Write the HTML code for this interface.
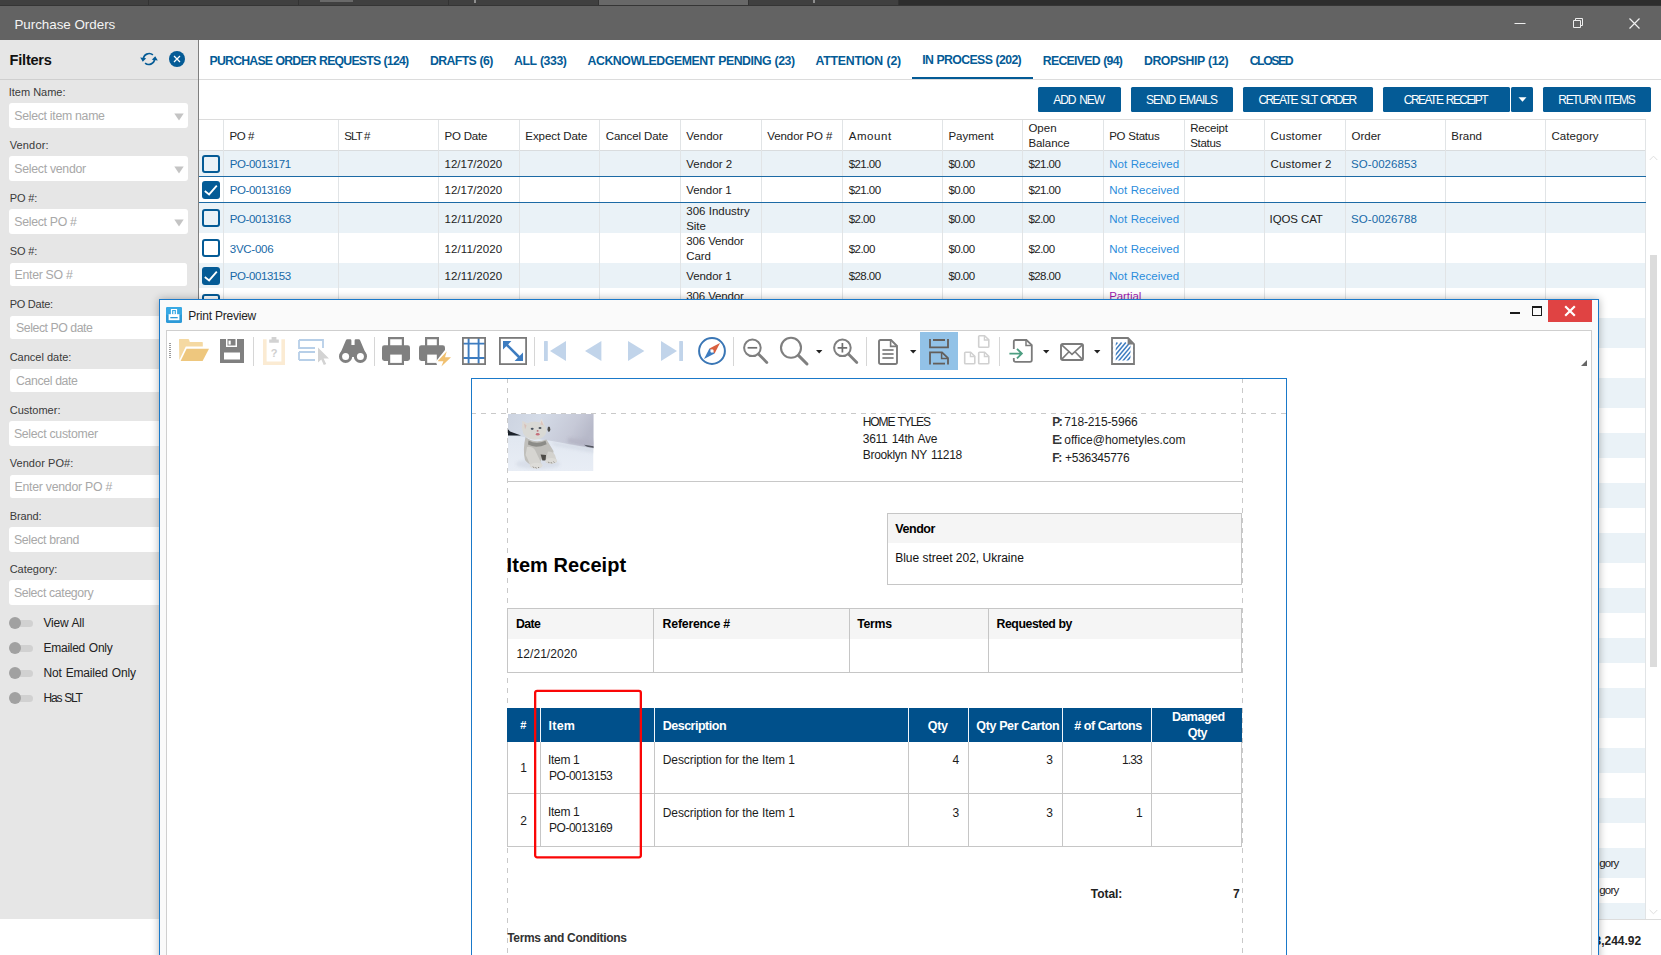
<!DOCTYPE html>
<html><head><meta charset="utf-8"><title>Purchase Orders</title>
<style>
html,body{margin:0;padding:0;}
body{width:1661px;height:955px;overflow:hidden;position:relative;background:#fff;font-family:"Liberation Sans", sans-serif;}
body div{position:absolute;box-sizing:border-box;}
svg{position:absolute;overflow:visible;}
</style></head>
<body>
<div style="left:0px;top:0px;width:1661px;height:6px;background:#2d2d2d;"></div>
<div style="left:0px;top:0px;width:898px;height:5px;background:#404040;"></div>
<div style="left:599px;top:0px;width:149px;height:5px;background:#686868;"></div>
<div style="left:148px;top:0px;width:1px;height:5px;background:#333;"></div>
<div style="left:298px;top:0px;width:1px;height:5px;background:#333;"></div>
<div style="left:448px;top:0px;width:1px;height:5px;background:#333;"></div>
<div style="left:598px;top:0px;width:1px;height:5px;background:#333;"></div>
<div style="left:748px;top:0px;width:1px;height:5px;background:#333;"></div>
<div style="left:898px;top:0px;width:1px;height:5px;background:#333;"></div>
<div style="left:0px;top:5px;width:1661px;height:1px;background:#353535;"></div>
<div style="left:320px;top:0px;width:33px;height:2px;background:#8a8a8a;opacity:.55;"></div>
<div style="left:474px;top:0px;width:2px;height:3px;background:#b0b0b0;opacity:.7;"></div>
<div style="left:813px;top:0px;width:2px;height:3px;background:#b0b0b0;opacity:.7;"></div>
<div style="left:0px;top:6px;width:1661px;height:34px;background:#636363;"></div>
<div style="left:14.40px;top:18.00px;font-size:13.4px;line-height:13.4px;color:#f4f4f4;letter-spacing:-0.023px;white-space:pre;">Purchase Orders</div>
<svg style="left:1510px;top:12px" width="140" height="24" viewBox="0 0 140 24"><path d="M4.5 11.5H15.5" stroke="#eee" stroke-width="1"/><path d="M63.5 8.5H70.5V15.5H63.5Z M65.5 8.5V6.5H72.5V13.5H70.5" fill="none" stroke="#eee" stroke-width="1"/><path d="M119.5 6.5L129.5 16.5M129.5 6.5L119.5 16.5" stroke="#f2f2f2" stroke-width="1.2"/></svg>
<div style="left:0px;top:40px;width:198px;height:879px;background:#e6e6e6;"></div>
<div style="left:198px;top:40px;width:1px;height:879px;background:#7f7f7f;"></div>
<div style="left:0px;top:79px;width:198px;height:1px;background:#cfcfcf;"></div>
<div style="left:9.60px;top:53.00px;font-size:14.6px;line-height:14.6px;color:#111;letter-spacing:-0.247px;white-space:pre;font-weight:700;">Filters</div>
<svg style="left:139px;top:50px" width="20" height="18" viewBox="0 0 20 18"><path d="M4.4 9.4A5.8 5.8 0 0 1 13.9 4.9" fill="none" stroke="#045b96" stroke-width="1.7"/><path d="M15.6 8.6A5.8 5.8 0 0 1 6.1 13.1" fill="none" stroke="#045b96" stroke-width="1.7"/><path d="M1.2 7.6L7.2 8.2L3.8 11.8Z" fill="#045b96"/><path d="M18.8 10.4L12.8 9.8L16.2 6.2Z" fill="#045b96"/></svg>
<svg style="left:169px;top:51px" width="16" height="16" viewBox="0 0 16 16"><circle cx="8" cy="8" r="8" fill="#045b96"/><path d="M5 5L11 11M11 5L5 11" stroke="#fff" stroke-width="1.25"/></svg>
<div style="left:8.70px;top:87.00px;font-size:11px;line-height:11px;color:#3a3a3a;letter-spacing:0.001px;white-space:pre;">Item Name:</div>
<div style="left:9px;top:103px;width:179px;height:25px;background:#fff;border-radius:3px;"></div>
<div style="left:14.30px;top:110.00px;font-size:12.3px;line-height:12.3px;color:#a8a8a8;letter-spacing:-0.291px;white-space:pre;">Select item name</div>
<svg style="left:174px;top:113px" width="10" height="8" viewBox="0 0 10 8"><path d="M0.3 0.5H9.7L5 7.5Z" fill="#c4c4c4"/></svg>
<div style="left:9.70px;top:140.00px;font-size:11px;line-height:11px;color:#3a3a3a;letter-spacing:0.156px;white-space:pre;">Vendor:</div>
<div style="left:9px;top:156px;width:179px;height:25px;background:#fff;border-radius:3px;"></div>
<div style="left:14.30px;top:163.00px;font-size:12.3px;line-height:12.3px;color:#a8a8a8;letter-spacing:-0.282px;white-space:pre;">Select vendor</div>
<svg style="left:174px;top:166px" width="10" height="8" viewBox="0 0 10 8"><path d="M0.3 0.5H9.7L5 7.5Z" fill="#c4c4c4"/></svg>
<div style="left:9.70px;top:193.00px;font-size:11px;line-height:11px;color:#3a3a3a;letter-spacing:-0.105px;white-space:pre;">PO #:</div>
<div style="left:9px;top:209px;width:179px;height:25px;background:#fff;border-radius:3px;"></div>
<div style="left:14.30px;top:216.00px;font-size:12.3px;line-height:12.3px;color:#a8a8a8;letter-spacing:-0.296px;white-space:pre;">Select PO #</div>
<svg style="left:174px;top:219px" width="10" height="8" viewBox="0 0 10 8"><path d="M0.3 0.5H9.7L5 7.5Z" fill="#c4c4c4"/></svg>
<div style="left:9.70px;top:246.00px;font-size:11px;line-height:11px;color:#3a3a3a;letter-spacing:-0.105px;white-space:pre;">SO #:</div>
<div style="left:10px;top:263px;width:177px;height:23px;background:#fff;border-radius:2.5px;"></div>
<div style="left:14.60px;top:269.00px;font-size:12.3px;line-height:12.3px;color:#a8a8a8;letter-spacing:-0.3px;white-space:pre;">Enter SO #</div>
<div style="left:9.70px;top:299.00px;font-size:11px;line-height:11px;color:#3a3a3a;letter-spacing:-0.255px;white-space:pre;">PO Date:</div>
<div style="left:10px;top:316px;width:177px;height:23px;background:#fff;border-radius:2.5px;"></div>
<div style="left:16.10px;top:322.00px;font-size:12.3px;line-height:12.3px;color:#a8a8a8;letter-spacing:-0.452px;white-space:pre;">Select PO date</div>
<div style="left:9.70px;top:352.00px;font-size:11px;line-height:11px;color:#3a3a3a;letter-spacing:-0.01px;white-space:pre;">Cancel date:</div>
<div style="left:10px;top:369px;width:177px;height:23px;background:#fff;border-radius:2.5px;"></div>
<div style="left:16.10px;top:375.00px;font-size:12.3px;line-height:12.3px;color:#a8a8a8;letter-spacing:-0.379px;white-space:pre;">Cancel date</div>
<div style="left:9.70px;top:405.00px;font-size:11px;line-height:11px;color:#3a3a3a;letter-spacing:0.003px;white-space:pre;">Customer:</div>
<div style="left:9px;top:421px;width:179px;height:25px;background:#fff;border-radius:3px;"></div>
<div style="left:13.90px;top:428.00px;font-size:12.3px;line-height:12.3px;color:#a8a8a8;letter-spacing:-0.283px;white-space:pre;">Select customer</div>
<div style="left:9.70px;top:458.00px;font-size:11px;line-height:11px;color:#3a3a3a;letter-spacing:0.067px;white-space:pre;">Vendor PO#:</div>
<div style="left:10px;top:475px;width:177px;height:23px;background:#fff;border-radius:2.5px;"></div>
<div style="left:14.60px;top:481.00px;font-size:12.3px;line-height:12.3px;color:#a8a8a8;letter-spacing:-0.263px;white-space:pre;">Enter vendor PO #</div>
<div style="left:9.70px;top:511.00px;font-size:11px;line-height:11px;color:#3a3a3a;letter-spacing:-0.111px;white-space:pre;">Brand:</div>
<div style="left:9px;top:527px;width:179px;height:25px;background:#fff;border-radius:3px;"></div>
<div style="left:13.90px;top:534.00px;font-size:12.3px;line-height:12.3px;color:#a8a8a8;letter-spacing:-0.319px;white-space:pre;">Select brand</div>
<div style="left:9.70px;top:564.00px;font-size:11px;line-height:11px;color:#3a3a3a;letter-spacing:-0.017px;white-space:pre;">Category:</div>
<div style="left:9px;top:580px;width:179px;height:25px;background:#fff;border-radius:3px;"></div>
<div style="left:13.90px;top:587.00px;font-size:12.3px;line-height:12.3px;color:#a8a8a8;letter-spacing:-0.351px;white-space:pre;">Select category</div>
<div style="left:12px;top:619.5px;width:21px;height:7px;background:#d1d1d1;border-radius:3.5px;"></div>
<div style="left:9px;top:617px;width:12px;height:12px;background:#a1a1a1;border-radius:6px;"></div>
<div style="left:43.60px;top:617.00px;font-size:12px;line-height:12px;color:#222;letter-spacing:-0.257px;white-space:pre;word-spacing:0.8px;">View All</div>
<div style="left:12px;top:644.5px;width:21px;height:7px;background:#d1d1d1;border-radius:3.5px;"></div>
<div style="left:9px;top:642px;width:12px;height:12px;background:#a1a1a1;border-radius:6px;"></div>
<div style="left:43.60px;top:642.00px;font-size:12px;line-height:12px;color:#222;letter-spacing:-0.278px;white-space:pre;word-spacing:0.8px;">Emailed Only</div>
<div style="left:12px;top:669.5px;width:21px;height:7px;background:#d1d1d1;border-radius:3.5px;"></div>
<div style="left:9px;top:667px;width:12px;height:12px;background:#a1a1a1;border-radius:6px;"></div>
<div style="left:43.60px;top:667.00px;font-size:12px;line-height:12px;color:#222;letter-spacing:-0.178px;white-space:pre;word-spacing:0.8px;">Not Emailed Only</div>
<div style="left:12px;top:694.5px;width:21px;height:7px;background:#d1d1d1;border-radius:3.5px;"></div>
<div style="left:9px;top:692px;width:12px;height:12px;background:#a1a1a1;border-radius:6px;"></div>
<div style="left:43.60px;top:692.00px;font-size:12px;line-height:12px;color:#222;letter-spacing:-1.21px;white-space:pre;word-spacing:0.8px;">Has SLT</div>
<div style="left:199px;top:79px;width:1462px;height:1px;background:#dcdcdc;"></div>
<div style="left:209.60px;top:55.00px;font-size:12.3px;line-height:12.3px;color:#045b96;letter-spacing:-0.797px;white-space:pre;font-weight:700;word-spacing:0.6px;">PURCHASE ORDER REQUESTS (124)</div>
<div style="left:430.00px;top:55.00px;font-size:12.3px;line-height:12.3px;color:#045b96;letter-spacing:-0.613px;white-space:pre;font-weight:700;word-spacing:0.6px;">DRAFTS (6)</div>
<div style="left:514.00px;top:55.00px;font-size:12.3px;line-height:12.3px;color:#045b96;letter-spacing:-0.441px;white-space:pre;font-weight:700;word-spacing:0.6px;">ALL (333)</div>
<div style="left:587.60px;top:55.00px;font-size:12.3px;line-height:12.3px;color:#045b96;letter-spacing:-0.456px;white-space:pre;font-weight:700;word-spacing:0.6px;">ACKNOWLEDGEMENT PENDING (23)</div>
<div style="left:815.60px;top:55.00px;font-size:12.3px;line-height:12.3px;color:#045b96;letter-spacing:-0.25px;white-space:pre;font-weight:700;word-spacing:0.6px;">ATTENTION (2)</div>
<div style="left:922.20px;top:54.00px;font-size:12.3px;line-height:12.3px;color:#045b96;letter-spacing:-0.645px;white-space:pre;font-weight:700;word-spacing:0.6px;">IN PROCESS (202)</div>
<div style="left:1042.80px;top:55.00px;font-size:12.3px;line-height:12.3px;color:#045b96;letter-spacing:-0.721px;white-space:pre;font-weight:700;word-spacing:0.6px;">RECEIVED (94)</div>
<div style="left:1144.00px;top:55.00px;font-size:12.3px;line-height:12.3px;color:#045b96;letter-spacing:-0.443px;white-space:pre;font-weight:700;word-spacing:0.6px;">DROPSHIP (12)</div>
<div style="left:1249.70px;top:55.00px;font-size:12.3px;line-height:12.3px;color:#045b96;letter-spacing:-1.452px;white-space:pre;font-weight:700;word-spacing:0.6px;">CLOSED</div>
<div style="left:911.5px;top:77px;width:121px;height:2px;background:#045b96;"></div>
<div style="left:1038px;top:87px;width:83px;height:25px;background:#045b96;border-radius:1.5px;"></div>
<div style="left:1053.25px;top:94.00px;font-size:12px;line-height:12px;color:#fff;letter-spacing:-1.073px;white-space:pre;word-spacing:1.6px;">ADD NEW</div>
<div style="left:1131px;top:87px;width:102px;height:25px;background:#045b96;border-radius:1.5px;"></div>
<div style="left:1146.10px;top:94.00px;font-size:12px;line-height:12px;color:#fff;letter-spacing:-1.049px;white-space:pre;word-spacing:1.6px;">SEND EMAILS</div>
<div style="left:1243px;top:87px;width:130px;height:25px;background:#045b96;border-radius:1.5px;"></div>
<div style="left:1258.40px;top:94.00px;font-size:12px;line-height:12px;color:#fff;letter-spacing:-1.549px;white-space:pre;word-spacing:1.6px;">CREATE SLT ORDER</div>
<div style="left:1383px;top:87px;width:127px;height:25px;background:#045b96;border-radius:1.5px;"></div>
<div style="left:1403.75px;top:94.00px;font-size:12px;line-height:12px;color:#fff;letter-spacing:-1.53px;white-space:pre;word-spacing:1.6px;">CREATE RECEIPT</div>
<div style="left:1511px;top:87px;width:22px;height:25px;background:#045b96;border-radius:1.5px;"></div>
<div style="left:1543px;top:87px;width:108px;height:25px;background:#045b96;border-radius:1.5px;"></div>
<div style="left:1558.25px;top:94.00px;font-size:12px;line-height:12px;color:#fff;letter-spacing:-1.281px;white-space:pre;word-spacing:1.6px;">RETURN ITEMS</div>
<svg style="left:1517.5px;top:97px" width="9" height="5" viewBox="0 0 9 5"><path d="M0.5 0.3H8.5L4.5 4.7Z" fill="#fff"/></svg>
<div style="left:199px;top:119px;width:1447px;height:1px;background:#dcdcdc;"></div>
<div style="left:199px;top:150px;width:1447px;height:26px;background:#eaf2f7;"></div>
<div style="left:199px;top:202px;width:1447px;height:31px;background:#eaf2f7;"></div>
<div style="left:199px;top:263px;width:1447px;height:25px;background:#eaf2f7;"></div>
<div style="left:199px;top:318px;width:1447px;height:30px;background:#eaf2f7;"></div>
<div style="left:199px;top:378px;width:1447px;height:30px;background:#eaf2f7;"></div>
<div style="left:199px;top:433px;width:1447px;height:25px;background:#eaf2f7;"></div>
<div style="left:199px;top:483px;width:1447px;height:25px;background:#eaf2f7;"></div>
<div style="left:199px;top:533px;width:1447px;height:30px;background:#eaf2f7;"></div>
<div style="left:199px;top:588px;width:1447px;height:25px;background:#eaf2f7;"></div>
<div style="left:199px;top:638px;width:1447px;height:25px;background:#eaf2f7;"></div>
<div style="left:199px;top:688px;width:1447px;height:30px;background:#eaf2f7;"></div>
<div style="left:199px;top:748px;width:1447px;height:25px;background:#eaf2f7;"></div>
<div style="left:199px;top:798px;width:1447px;height:25px;background:#eaf2f7;"></div>
<div style="left:199px;top:848px;width:1447px;height:30px;background:#eaf2f7;"></div>
<div style="left:199px;top:903px;width:1447px;height:16px;background:#eaf2f7;"></div>
<div style="left:199px;top:150px;width:1447px;height:1px;background:#d9dcde;"></div>
<div style="left:223px;top:120px;width:1px;height:799px;background:#e1e4e6;"></div>
<div style="left:338px;top:120px;width:1px;height:799px;background:#e1e4e6;"></div>
<div style="left:438px;top:120px;width:1px;height:799px;background:#e1e4e6;"></div>
<div style="left:519px;top:120px;width:1px;height:799px;background:#e1e4e6;"></div>
<div style="left:599px;top:120px;width:1px;height:799px;background:#e1e4e6;"></div>
<div style="left:680px;top:120px;width:1px;height:799px;background:#e1e4e6;"></div>
<div style="left:761px;top:120px;width:1px;height:799px;background:#e1e4e6;"></div>
<div style="left:842px;top:120px;width:1px;height:799px;background:#e1e4e6;"></div>
<div style="left:942px;top:120px;width:1px;height:799px;background:#e1e4e6;"></div>
<div style="left:1022px;top:120px;width:1px;height:799px;background:#e1e4e6;"></div>
<div style="left:1103px;top:120px;width:1px;height:799px;background:#e1e4e6;"></div>
<div style="left:1184px;top:120px;width:1px;height:799px;background:#e1e4e6;"></div>
<div style="left:1264px;top:120px;width:1px;height:799px;background:#e1e4e6;"></div>
<div style="left:1345px;top:120px;width:1px;height:799px;background:#e1e4e6;"></div>
<div style="left:1445px;top:120px;width:1px;height:799px;background:#e1e4e6;"></div>
<div style="left:1545px;top:120px;width:1px;height:799px;background:#e1e4e6;"></div>
<div style="left:1645px;top:120px;width:1px;height:799px;background:#e1e4e6;"></div>
<div style="left:199px;top:176px;width:1447px;height:1px;background:#1c6aa5;"></div>
<div style="left:199px;top:202px;width:1447px;height:1px;background:#1c6aa5;"></div>
<div style="left:229.50px;top:131.00px;font-size:11.5px;line-height:11.5px;color:#222;letter-spacing:-0.437px;white-space:pre;">PO #</div>
<div style="left:344.20px;top:131.00px;font-size:11.5px;line-height:11.5px;color:#222;letter-spacing:-0.858px;white-space:pre;">SLT #</div>
<div style="left:444.50px;top:131.00px;font-size:11.5px;line-height:11.5px;color:#222;letter-spacing:-0.201px;white-space:pre;">PO Date</div>
<div style="left:525.30px;top:131.00px;font-size:11.5px;line-height:11.5px;color:#222;letter-spacing:-0.065px;white-space:pre;">Expect Date</div>
<div style="left:605.70px;top:131.00px;font-size:11.5px;line-height:11.5px;color:#222;letter-spacing:-0.089px;white-space:pre;">Cancel Date</div>
<div style="left:686.30px;top:131.00px;font-size:11.5px;line-height:11.5px;color:#222;letter-spacing:0.016px;white-space:pre;">Vendor</div>
<div style="left:767.30px;top:131.00px;font-size:11.5px;line-height:11.5px;color:#222;letter-spacing:-0.085px;white-space:pre;">Vendor PO #</div>
<div style="left:848.70px;top:131.00px;font-size:11.5px;line-height:11.5px;color:#222;letter-spacing:0.573px;white-space:pre;">Amount</div>
<div style="left:948.40px;top:131.00px;font-size:11.5px;line-height:11.5px;color:#222;letter-spacing:0.002px;white-space:pre;">Payment</div>
<div style="left:1109.20px;top:131.00px;font-size:11.5px;line-height:11.5px;color:#222;letter-spacing:-0.245px;white-space:pre;">PO Status</div>
<div style="left:1270.60px;top:131.00px;font-size:11.5px;line-height:11.5px;color:#222;letter-spacing:0.183px;white-space:pre;">Customer</div>
<div style="left:1351.60px;top:131.00px;font-size:11.5px;line-height:11.5px;color:#222;letter-spacing:-0.042px;white-space:pre;">Order</div>
<div style="left:1451.20px;top:131.00px;font-size:11.5px;line-height:11.5px;color:#222;letter-spacing:0.027px;white-space:pre;">Brand</div>
<div style="left:1551.50px;top:131.00px;font-size:11.5px;line-height:11.5px;color:#222;letter-spacing:0.055px;white-space:pre;">Category</div>
<div style="left:1028.40px;top:123.00px;font-size:11.5px;line-height:11.5px;color:#222;letter-spacing:0.021px;white-space:pre;">Open</div>
<div style="left:1028.40px;top:138.00px;font-size:11.5px;line-height:11.5px;color:#222;letter-spacing:-0.06px;white-space:pre;">Balance</div>
<div style="left:1190.20px;top:123.00px;font-size:11.5px;line-height:11.5px;color:#222;letter-spacing:-0.216px;white-space:pre;">Receipt</div>
<div style="left:1190.20px;top:138.00px;font-size:11.5px;line-height:11.5px;color:#222;letter-spacing:-0.29px;white-space:pre;">Status</div>
<div style="left:202px;top:155px;width:18px;height:18px;border:2px solid #045b96;border-radius:3px;"></div>
<div style="left:229.80px;top:159.00px;font-size:11.5px;line-height:11.5px;color:#1769a7;letter-spacing:-0.424px;white-space:pre;">PO-0013171</div>
<div style="left:444.50px;top:159.00px;font-size:11.5px;line-height:11.5px;color:#222;letter-spacing:0.016px;white-space:pre;">12/17/2020</div>
<div style="left:686.30px;top:159.00px;font-size:11.5px;line-height:11.5px;color:#222;letter-spacing:-0.035px;white-space:pre;">Vendor 2</div>
<div style="left:848.70px;top:159.00px;font-size:11.5px;line-height:11.5px;color:#222;letter-spacing:-0.556px;white-space:pre;">$21.00</div>
<div style="left:948.40px;top:159.00px;font-size:11.5px;line-height:11.5px;color:#222;letter-spacing:-0.521px;white-space:pre;">$0.00</div>
<div style="left:1028.40px;top:159.00px;font-size:11.5px;line-height:11.5px;color:#222;letter-spacing:-0.556px;white-space:pre;">$21.00</div>
<div style="left:1109.20px;top:159.00px;font-size:11.5px;line-height:11.5px;color:#2b8ddc;letter-spacing:0.087px;white-space:pre;">Not Received</div>
<div style="left:1270.60px;top:159.00px;font-size:11.5px;line-height:11.5px;color:#222;letter-spacing:0.151px;white-space:pre;">Customer 2</div>
<div style="left:1351.00px;top:159.00px;font-size:11.5px;line-height:11.5px;color:#1769a7;letter-spacing:0.076px;white-space:pre;">SO-0026853</div>
<div style="left:202px;top:181px;width:18px;height:18px;background:#045b96;border-radius:3px;"></div>
<svg style="left:202px;top:181px" width="18" height="18" viewBox="0 0 18 18"><path d="M2.8 10L7.1 13.4L14.8 4.6" fill="none" stroke="#fff" stroke-width="1.8"/></svg>
<div style="left:229.80px;top:185.00px;font-size:11.5px;line-height:11.5px;color:#1769a7;letter-spacing:-0.424px;white-space:pre;">PO-0013169</div>
<div style="left:444.50px;top:185.00px;font-size:11.5px;line-height:11.5px;color:#222;letter-spacing:0.016px;white-space:pre;">12/17/2020</div>
<div style="left:686.30px;top:185.00px;font-size:11.5px;line-height:11.5px;color:#222;letter-spacing:-0.092px;white-space:pre;">Vendor 1</div>
<div style="left:848.70px;top:185.00px;font-size:11.5px;line-height:11.5px;color:#222;letter-spacing:-0.556px;white-space:pre;">$21.00</div>
<div style="left:948.40px;top:185.00px;font-size:11.5px;line-height:11.5px;color:#222;letter-spacing:-0.521px;white-space:pre;">$0.00</div>
<div style="left:1028.40px;top:185.00px;font-size:11.5px;line-height:11.5px;color:#222;letter-spacing:-0.556px;white-space:pre;">$21.00</div>
<div style="left:1109.20px;top:185.00px;font-size:11.5px;line-height:11.5px;color:#2b8ddc;letter-spacing:0.087px;white-space:pre;">Not Received</div>
<div style="left:202px;top:209px;width:18px;height:18px;border:2px solid #045b96;border-radius:3px;"></div>
<div style="left:229.80px;top:214.00px;font-size:11.5px;line-height:11.5px;color:#1769a7;letter-spacing:-0.424px;white-space:pre;">PO-0013163</div>
<div style="left:444.50px;top:214.00px;font-size:11.5px;line-height:11.5px;color:#222;letter-spacing:0.11px;white-space:pre;">12/11/2020</div>
<div style="left:686.30px;top:206.00px;font-size:11.5px;line-height:11.5px;color:#222;letter-spacing:0.006px;white-space:pre;">306 Industry</div>
<div style="left:686.30px;top:221.00px;font-size:11.5px;line-height:11.5px;color:#222;letter-spacing:-0.097px;white-space:pre;">Site</div>
<div style="left:848.70px;top:214.00px;font-size:11.5px;line-height:11.5px;color:#222;letter-spacing:-0.521px;white-space:pre;">$2.00</div>
<div style="left:948.40px;top:214.00px;font-size:11.5px;line-height:11.5px;color:#222;letter-spacing:-0.521px;white-space:pre;">$0.00</div>
<div style="left:1028.40px;top:214.00px;font-size:11.5px;line-height:11.5px;color:#222;letter-spacing:-0.521px;white-space:pre;">$2.00</div>
<div style="left:1109.20px;top:214.00px;font-size:11.5px;line-height:11.5px;color:#2b8ddc;letter-spacing:0.087px;white-space:pre;">Not Received</div>
<div style="left:1269.60px;top:214.00px;font-size:11.5px;line-height:11.5px;color:#222;letter-spacing:-0.114px;white-space:pre;">IQOS CAT</div>
<div style="left:1351.00px;top:214.00px;font-size:11.5px;line-height:11.5px;color:#1769a7;letter-spacing:0.076px;white-space:pre;">SO-0026788</div>
<div style="left:202px;top:239px;width:18px;height:18px;border:2px solid #045b96;border-radius:3px;"></div>
<div style="left:229.80px;top:244.00px;font-size:11.5px;line-height:11.5px;color:#1769a7;letter-spacing:-0.265px;white-space:pre;">3VC-006</div>
<div style="left:444.50px;top:244.00px;font-size:11.5px;line-height:11.5px;color:#222;letter-spacing:0.11px;white-space:pre;">12/11/2020</div>
<div style="left:686.30px;top:236.00px;font-size:11.5px;line-height:11.5px;color:#222;letter-spacing:-0.133px;white-space:pre;">306 Vendor</div>
<div style="left:686.30px;top:251.00px;font-size:11.5px;line-height:11.5px;color:#222;letter-spacing:-0.123px;white-space:pre;">Card</div>
<div style="left:848.70px;top:244.00px;font-size:11.5px;line-height:11.5px;color:#222;letter-spacing:-0.521px;white-space:pre;">$2.00</div>
<div style="left:948.40px;top:244.00px;font-size:11.5px;line-height:11.5px;color:#222;letter-spacing:-0.521px;white-space:pre;">$0.00</div>
<div style="left:1028.40px;top:244.00px;font-size:11.5px;line-height:11.5px;color:#222;letter-spacing:-0.521px;white-space:pre;">$2.00</div>
<div style="left:1109.20px;top:244.00px;font-size:11.5px;line-height:11.5px;color:#2b8ddc;letter-spacing:0.087px;white-space:pre;">Not Received</div>
<div style="left:202px;top:267px;width:18px;height:18px;background:#045b96;border-radius:3px;"></div>
<svg style="left:202px;top:267px" width="18" height="18" viewBox="0 0 18 18"><path d="M2.8 10L7.1 13.4L14.8 4.6" fill="none" stroke="#fff" stroke-width="1.8"/></svg>
<div style="left:229.80px;top:271.00px;font-size:11.5px;line-height:11.5px;color:#1769a7;letter-spacing:-0.424px;white-space:pre;">PO-0013153</div>
<div style="left:444.50px;top:271.00px;font-size:11.5px;line-height:11.5px;color:#222;letter-spacing:0.11px;white-space:pre;">12/11/2020</div>
<div style="left:686.30px;top:271.00px;font-size:11.5px;line-height:11.5px;color:#222;letter-spacing:-0.092px;white-space:pre;">Vendor 1</div>
<div style="left:848.70px;top:271.00px;font-size:11.5px;line-height:11.5px;color:#222;letter-spacing:-0.556px;white-space:pre;">$28.00</div>
<div style="left:948.40px;top:271.00px;font-size:11.5px;line-height:11.5px;color:#222;letter-spacing:-0.521px;white-space:pre;">$0.00</div>
<div style="left:1028.40px;top:271.00px;font-size:11.5px;line-height:11.5px;color:#222;letter-spacing:-0.556px;white-space:pre;">$28.00</div>
<div style="left:1109.20px;top:271.00px;font-size:11.5px;line-height:11.5px;color:#2b8ddc;letter-spacing:0.087px;white-space:pre;">Not Received</div>
<div style="left:202px;top:294px;width:18px;height:18px;border:2px solid #045b96;border-radius:3px;"></div>
<div style="left:686.30px;top:291.00px;font-size:11.5px;line-height:11.5px;color:#222;letter-spacing:-0.133px;white-space:pre;">306 Vendor</div>
<div style="left:1109.20px;top:291.00px;font-size:11.5px;line-height:11.5px;color:#a21cb0;letter-spacing:-0.08px;white-space:pre;">Partial</div>
<div style="left:848.70px;top:298.00px;font-size:11.5px;line-height:11.5px;color:#222;letter-spacing:0px;white-space:pre;">$</div>
<div style="left:948.40px;top:298.00px;font-size:11.5px;line-height:11.5px;color:#222;letter-spacing:0px;white-space:pre;">$</div>
<div style="left:1028.40px;top:298.00px;font-size:11.5px;line-height:11.5px;color:#222;letter-spacing:0px;white-space:pre;">$</div>
<div style="left:1599.30px;top:858.00px;font-size:11.5px;line-height:11.5px;color:#222;letter-spacing:-0.84px;white-space:pre;">gory</div>
<div style="left:1599.30px;top:885.00px;font-size:11.5px;line-height:11.5px;color:#222;letter-spacing:-0.84px;white-space:pre;">gory</div>
<div style="left:1646px;top:120px;width:15px;height:799px;background:#fff;"></div>
<div style="left:1650px;top:255px;width:7px;height:412px;background:#dcdcdc;"></div>
<svg style="left:1649px;top:155px" width="9" height="6" viewBox="0 0 9 6"><path d="M0.7 5L4.5 1.2L8.3 5" fill="none" stroke="#dedede" stroke-width="1"/></svg>
<svg style="left:1649px;top:909px" width="9" height="6" viewBox="0 0 9 6"><path d="M0.7 1L4.5 4.8L8.3 1" fill="none" stroke="#dedede" stroke-width="1"/></svg>
<div style="left:0px;top:919px;width:1661px;height:36px;background:#fff;"></div>
<div style="left:199px;top:919px;width:1462px;height:1px;background:#dddddd;"></div>
<div style="left:1594.46px;top:935.00px;font-size:12px;line-height:12px;color:#222;letter-spacing:0.0px;white-space:pre;font-weight:700;">3,244.92</div>
<div style="left:159px;top:299px;width:1440px;height:700px;background:#fafafa;border:1px solid #1a79c9;box-shadow:0 0 8px 0 rgba(0,0,0,.30);"></div>
<div style="left:166px;top:330px;width:1426px;height:700px;background:#fff;border:1px solid #cfcfcf;"></div>
<svg style="left:166px;top:307px" width="16" height="16" viewBox="0 0 16 16"><rect x="0" y="0" width="16" height="16" rx="1.5" fill="#2c9ad8"/><rect x="0" y="0" width="16" height="8" rx="1.5" fill="#38a9e4"/><path d="M5.5 2.5H10.5V8H5.5Z" fill="none" stroke="#fff" stroke-width="1.2"/><rect x="7" y="4" width="2" height="3" fill="#bfe3f7"/><path d="M2.6 7.2H13.4V13.2H2.6Z" fill="#fff"/><rect x="4.3" y="10" width="7.4" height="1.3" fill="#2c9ad8"/></svg>
<div style="left:188.30px;top:310.00px;font-size:12px;line-height:12px;color:#1e1e1e;letter-spacing:-0.227px;white-space:pre;">Print Preview</div>
<div style="left:1510px;top:312px;width:10px;height:2px;background:#1a1a1a;"></div>
<div style="left:1532px;top:306px;width:10px;height:10px;border:1px solid #1a1a1a;border-top:2px solid #1a1a1a;"></div>
<div style="left:1548px;top:300px;width:44px;height:22px;background:#e04343;"></div>
<svg style="left:1564px;top:305px" width="12" height="12" viewBox="0 0 12 12"><path d="M1.2 1.2L10.8 10.8M10.8 1.2L1.2 10.8" stroke="#fff" stroke-width="2.2"/></svg>
<svg style="left:1581px;top:360px" width="6" height="6" viewBox="0 0 6 6"><path d="M6 0V6H0Z" fill="#666"/></svg>
<svg style="left:169px;top:343px" width="3" height="16" viewBox="0 0 3 16"><rect x="0" y="0" width="2" height="1" fill="#9a9a9a"/><rect x="0" y="2" width="2" height="1" fill="#9a9a9a"/><rect x="0" y="4" width="2" height="1" fill="#9a9a9a"/><rect x="0" y="6" width="2" height="1" fill="#9a9a9a"/><rect x="0" y="8" width="2" height="1" fill="#9a9a9a"/><rect x="0" y="10" width="2" height="1" fill="#9a9a9a"/><rect x="0" y="12" width="2" height="1" fill="#9a9a9a"/><rect x="0" y="14" width="2" height="1" fill="#9a9a9a"/></svg>
<div style="left:253px;top:337px;width:1px;height:29px;background:#d6d6d6;"></div>
<div style="left:374px;top:337px;width:1px;height:29px;background:#d6d6d6;"></div>
<div style="left:534px;top:337px;width:1px;height:29px;background:#d6d6d6;"></div>
<div style="left:733px;top:337px;width:1px;height:29px;background:#d6d6d6;"></div>
<div style="left:866px;top:337px;width:1px;height:29px;background:#d6d6d6;"></div>
<div style="left:999px;top:337px;width:1px;height:29px;background:#d6d6d6;"></div>
<svg style="left:179px;top:339px" width="30" height="22" viewBox="0 0 30 22"><path d="M0 0.6Q0 0 .6 0H9.2Q9.8 0 10 .5L10.8 3H23.2Q23.8 3 23.8 3.6V7.6H6.8L0.3 21Z" fill="#f5d9a2"/><path d="M7.6 9.8H30L23.6 22H1.6Z" fill="#eec77e"/></svg>
<svg style="left:220px;top:339px" width="24" height="24" viewBox="0 0 24 24"><path d="M0 0H24V24H0Z M6 0V8H17V0Z M4 13.5V20.5H20V13.5Z" fill="#808080" fill-rule="evenodd"/><rect x="7.5" y="0" width="8" height="6.5" fill="#808080"/><rect x="8.5" y="1.6" width="2.2" height="4" fill="#fff"/></svg>
<svg style="left:263px;top:337px" width="22" height="28" viewBox="0 0 22 28"><path d="M0 2.2H22V28H0Z M3.6 2.2V24.4H18.4V2.2Z" fill="#fbebd3" fill-rule="evenodd"/><path d="M6.2 2.4H15.8V5.8H6.2Z M8.6 0H13.4V3H8.6Z" fill="#d2d2d2"/><text x="11" y="19.6" font-size="11" font-weight="700" text-anchor="middle" fill="#cfcfcf" font-family="Liberation Sans">?</text></svg>
<svg style="left:298px;top:339px" width="32" height="27" viewBox="0 0 32 27"><path d="M1 1H25V9" fill="none" stroke="#b7cfe8" stroke-width="1.8"/><path d="M1 1V9H17" fill="none" stroke="#b7cfe8" stroke-width="1.8"/><path d="M1 13H17M1 21H17M1 13V21" fill="none" stroke="#b7cfe8" stroke-width="1.8"/><path d="M20 8.5L31 19.5H25.6L28.2 25L25.8 26L23.3 20.6L20 23.6Z" fill="#d3d3d3"/></svg>
<svg style="left:339px;top:339px" width="28" height="24" viewBox="0 0 28 24"><path d="M8.4 0.3H11.2Q12.4 0.3 12.4 1.6V6H15.6V1.6Q15.6 0.3 16.8 0.3H19.6Q20.8 0.3 21.2 1.6L27.6 16.5L13.6 18 13.6 9H14.4L14.4 18L0.4 16.5L6.8 1.6Q7.2 0.3 8.4 0.3Z" fill="#808080"/><circle cx="6.6" cy="17.4" r="6.6" fill="#808080"/><circle cx="21.4" cy="17.4" r="6.6" fill="#808080"/><circle cx="6.6" cy="17.4" r="3.5" fill="#fff"/><circle cx="21.4" cy="17.4" r="3.5" fill="#fff"/><rect x="12.2" y="6" width="3.6" height="9" fill="#808080"/></svg>
<svg style="left:382px;top:337px" width="28" height="28" viewBox="0 0 28 28"><path d="M6 0H22V10H19.8V2.2H8.2V10H6Z" fill="#808080"/><path d="M2.4 8.2H25.6Q28 8.2 28 10.6V21.6Q28 24 25.6 24H2.4Q0 24 0 21.6V10.6Q0 8.2 2.4 8.2Z" fill="#808080"/><path d="M6 17.6H22V28H6Z" fill="#808080"/><path d="M8.2 17.6H19.8V25.9H8.2Z" fill="#fff"/></svg>
<svg style="left:419px;top:337px" width="32" height="30" viewBox="0 0 32 30"><path d="M6 0H20V10H17.8V2.2H8.2V10H6Z" fill="#808080"/><path d="M2.4 8.2H23.6Q26 8.2 26 10.6V21.6Q26 24 23.6 24H2.4Q0 24 0 21.6V10.6Q0 8.2 2.4 8.2Z" fill="#808080"/><path d="M6 17.6H20V28H6Z" fill="#808080"/><path d="M8.2 17.6H17.8V25.9H8.2Z" fill="#fff"/><path d="M27.2 11.4L16.8 24.6L18.6 29.6H33V11.4Z" fill="#fff"/><path d="M27.8 14.3L18.6 24.2H24.4L22.4 29.6L32 20.3H26Z" fill="#f0c070"/></svg>
<svg style="left:462px;top:337px" width="24" height="28" viewBox="0 0 24 28"><path d="M6.6 1V27M16.6 1V27M1 6.6H23M1 21H23" stroke="#3d7cc0" stroke-width="1.9" fill="none"/><rect x="0.9" y="0.9" width="22.2" height="26.2" fill="none" stroke="#7a7a7a" stroke-width="1.8"/></svg>
<svg style="left:499px;top:337px" width="28" height="28" viewBox="0 0 28 28"><rect x="0.9" y="0.9" width="26.2" height="26.2" fill="none" stroke="#7a7a7a" stroke-width="1.8"/><path d="M7 7L21 21" stroke="#3d7cc0" stroke-width="2.6"/><path d="M4 4H12.4L4 12.4Z M24 24H15.6L24 15.6Z" fill="#3d7cc0"/></svg>
<svg style="left:544px;top:341px" width="23" height="20" viewBox="0 0 23 20"><rect x="0" y="0" width="3.8" height="20" rx=".6" fill="#c1d4ea"/><path d="M6 10L22 0V20Z" fill="#c1d4ea"/></svg>
<svg style="left:585px;top:341px" width="17" height="20" viewBox="0 0 17 20"><path d="M0 10L16.4 0V20Z" fill="#c1d4ea"/></svg>
<svg style="left:628px;top:341px" width="17" height="20" viewBox="0 0 17 20"><path d="M16.4 10L0 0V20Z" fill="#c1d4ea"/></svg>
<svg style="left:661px;top:341px" width="23" height="20" viewBox="0 0 23 20"><path d="M16 10L0 0V20Z" fill="#c1d4ea"/><rect x="18.2" y="0" width="3.8" height="20" rx=".6" fill="#c1d4ea"/></svg>
<svg style="left:698px;top:337px" width="28" height="28" viewBox="0 0 28 28"><circle cx="14" cy="14" r="12.9" fill="#fff" stroke="#3a76b5" stroke-width="2"/><path d="M22 6L16.6 16.6L11.4 11.4Z" fill="#d9603f"/><path d="M6 22L11.4 11.4L16.6 16.6Z" fill="#3d7cc0"/><circle cx="14" cy="14" r="1.7" fill="#fff"/></svg>
<svg style="left:743px;top:339px" width="26" height="25" viewBox="0 0 26 25"><circle cx="9.4" cy="8.8" r="8.3" fill="none" stroke="#7f7f7f" stroke-width="2"/><path d="M15.4 15L23.8 23.4" stroke="#7f7f7f" stroke-width="2.8" stroke-linecap="round"/><path d="M4.6 8.8H14.2" stroke="#6f6f6f" stroke-width="1.7"/></svg>
<svg style="left:780px;top:337px" width="29" height="28" viewBox="0 0 29 28"><circle cx="11" cy="10.8" r="10" fill="none" stroke="#7f7f7f" stroke-width="2.1"/><path d="M18.4 18.4L27 27" stroke="#7f7f7f" stroke-width="3" stroke-linecap="round"/></svg>
<svg style="left:833px;top:339px" width="26" height="25" viewBox="0 0 26 25"><circle cx="9.4" cy="8.8" r="8.3" fill="none" stroke="#7f7f7f" stroke-width="2"/><path d="M15.4 15L23.8 23.4" stroke="#7f7f7f" stroke-width="2.8" stroke-linecap="round"/><path d="M4.6 8.8H14.2M9.4 4V13.6" stroke="#6f6f6f" stroke-width="1.7"/></svg>
<svg style="left:816px;top:350px" width="7" height="4" viewBox="0 0 7 4"><path d="M0 0H6.4L3.2 3.6Z" fill="#222"/></svg>
<svg style="left:910px;top:350px" width="7" height="4" viewBox="0 0 7 4"><path d="M0 0H6.4L3.2 3.6Z" fill="#222"/></svg>
<svg style="left:1043px;top:350px" width="7" height="4" viewBox="0 0 7 4"><path d="M0 0H6.4L3.2 3.6Z" fill="#222"/></svg>
<svg style="left:1094px;top:350px" width="7" height="4" viewBox="0 0 7 4"><path d="M0 0H6.4L3.2 3.6Z" fill="#222"/></svg>
<svg style="left:878px;top:339px" width="20" height="26" viewBox="0 0 20 26"><path d="M2.4 1H13L19 7V23.2Q19 25 17.2 25H2.8Q1 25 1 23.2V2.4Q1 1 2.4 1Z" fill="#fff" stroke="#7b7b7b" stroke-width="1.9"/><path d="M12.6 1.4V7.4H18.6" fill="none" stroke="#7b7b7b" stroke-width="1.6"/><path d="M4.4 11H15.6M4.4 15H15.6M4.4 19H15.6" stroke="#6b6b6b" stroke-width="1.7"/></svg>
<div style="left:920px;top:332px;width:38px;height:38px;background:#92c2e7;"></div>
<svg style="left:929px;top:339px" width="20" height="26" viewBox="0 0 20 26"><path d="M1 0V8.4H19V0M4 1H16" fill="none" stroke="#635e5a" stroke-width="1.8"/><path d="M1 25.6V13.4H13L19 19.2V25.6" fill="none" stroke="#635e5a" stroke-width="1.8"/><path d="M12.6 13.6V19.4H18.8" fill="none" stroke="#635e5a" stroke-width="1.5"/><path d="M4 24.6H16" stroke="#635e5a" stroke-width="1.8"/></svg>
<svg style="left:964px;top:335px" width="27" height="30" viewBox="0 0 27 30"><path d="M15.6 0.7H20.6L24.8 4.8V11.4Q24.8 12.3 23.8 12.3H15.6Q14.7 12.3 14.7 11.4V1.6Q14.7 0.7 15.6 0.7Z" fill="#fff" stroke="#d0d0d0" stroke-width="1.6"/><path d="M20.4 0.9V5H24.6" fill="none" stroke="#d0d0d0" stroke-width="1.3"/><path d="M1.6 17.2H6.6L10.8 21.3V27.9Q10.8 28.8 9.8 28.8H1.6Q0.7 28.8 0.7 27.9V18.1Q0.7 17.2 1.6 17.2Z" fill="#fff" stroke="#d0d0d0" stroke-width="1.6"/><path d="M6.4 17.4V21.5H10.6" fill="none" stroke="#d0d0d0" stroke-width="1.3"/><path d="M15.6 17.2H20.6L24.8 21.3V27.9Q24.8 28.8 23.8 28.8H15.6Q14.7 28.8 14.7 27.9V18.1Q14.7 17.2 15.6 17.2Z" fill="#fff" stroke="#d0d0d0" stroke-width="1.6"/><path d="M20.4 17.4V21.5H24.6" fill="none" stroke="#d0d0d0" stroke-width="1.3"/></svg>
<svg style="left:1009px;top:339px" width="24" height="24" viewBox="0 0 24 24"><path d="M6.4 1H17.4L22.8 6.2V21Q22.8 22.8 21 22.8H6.6Q4.8 22.8 4.8 21V2.6Q4.8 1 6.4 1Z" fill="#fff" stroke="#7b7b7b" stroke-width="1.8"/><path d="M17 1.4V6.6H22.4" fill="none" stroke="#7b7b7b" stroke-width="1.5"/><rect x="3" y="10" width="4" height="9" fill="#fff"/><path d="M0.4 14.6H12.4M8 9.8L12.8 14.6L8 19.4" fill="none" stroke="#4d9e81" stroke-width="1.9"/></svg>
<svg style="left:1060px;top:343px" width="24" height="18" viewBox="0 0 24 18"><rect x="1" y="1" width="22" height="16" rx="1.6" fill="#fff" stroke="#7b7b7b" stroke-width="1.9"/><path d="M1.4 1.6L12 11.4L22.6 1.6M1.6 16.4L9 8.8M22.4 16.4L15 8.8" fill="none" stroke="#7b7b7b" stroke-width="1.6"/></svg>
<svg style="left:1111px;top:337px" width="24" height="28" viewBox="0 0 24 28"><defs><clipPath id="wm"><path d="M1 1H17L23 7V27H1Z"/></clipPath></defs><path d="M1 1H17L23 7V27H1Z" fill="#fff"/><g clip-path="url(#wm)" stroke="#3d7cc0" stroke-width="1.5"><path d="M-13.8 24.6L2.1999999999999993 5.400000000000002"/><path d="M-9.600000000000001 24.6L6.399999999999999 5.400000000000002"/><path d="M-5.4 24.6L10.6 5.400000000000002"/><path d="M-1.2000000000000002 24.6L14.8 5.400000000000002"/><path d="M3.0 24.6L19.0 5.400000000000002"/><path d="M7.2 24.6L23.2 5.400000000000002"/><path d="M11.4 24.6L27.4 5.400000000000002"/><path d="M15.600000000000001 24.6L31.6 5.400000000000002"/><path d="M19.8 24.6L35.8 5.400000000000002"/><path d="M24.0 24.6L40.0 5.400000000000002"/></g><path d="M3.4 1V27M1 3.2H20M1 24.8H23M20.8 6V27" stroke="#fff" stroke-width="2.6" fill="none"/><path d="M1 1H17L23 7V27H1Z" fill="none" stroke="#7b7b7b" stroke-width="1.8"/><path d="M16.6 1.2V7.4H22.8Z" fill="#7b7b7b"/></svg>
<div style="left:471px;top:378px;width:816px;height:700px;background:#fff;border:1px solid #1a79c9;"></div>
<div style="left:472px;top:413px;width:814px;height:1px;background:repeating-linear-gradient(90deg,#c9c9c9 0 5px,transparent 5px 10px);background-position:-1px 0;"></div>
<div style="left:507px;top:379px;width:1px;height:600px;background:repeating-linear-gradient(180deg,#c9c9c9 0 5px,transparent 5px 10px);background-position:0 -1px;"></div>
<div style="left:1242px;top:379px;width:1px;height:600px;background:repeating-linear-gradient(180deg,#c9c9c9 0 5px,transparent 5px 10px);background-position:0 -1px;"></div>
<svg style="left:507.5px;top:414px" width="85.5" height="57" viewBox="0 0 85.5 57"><defs><filter id="b1" x="-30%" y="-30%" width="160%" height="160%"><feGaussianBlur stdDeviation="1.4"/></filter><filter id="b2" x="-30%" y="-30%" width="160%" height="160%"><feGaussianBlur stdDeviation="0.7"/></filter><filter id="b3" x="-30%" y="-30%" width="160%" height="160%"><feGaussianBlur stdDeviation="0.45"/></filter><linearGradient id="pil" x1="0" y1="0" x2="1" y2="0.25"><stop offset="0" stop-color="#ccd3e0"/><stop offset=".4" stop-color="#d4dbe7"/><stop offset=".8" stop-color="#c6c9d7"/><stop offset="1" stop-color="#b7b9c9"/></linearGradient><linearGradient id="sofa" x1="0" y1="0" x2="0" y2="1"><stop offset="0" stop-color="#dde4ee"/><stop offset="1" stop-color="#e8edf5"/></linearGradient><clipPath id="kc"><rect width="85.5" height="57"/></clipPath></defs><g clip-path="url(#kc)"><rect width="85.5" height="57" fill="url(#sofa)"/><path d="M-3 -3H89V35L60 30L44 27L12 22.5L-3 21Z" fill="url(#pil)" filter="url(#b2)"/><path d="M60 24L89 27V34L60 29Z" fill="#b4b4c4" filter="url(#b1)" opacity=".8"/><path d="M-2 13L2 17.5L13 21.4L-2 21.4Z" fill="#1b202a" filter="url(#b2)"/><path d="M76 30.8L87 32.6V34.2L79 32.8Z" fill="#454852" filter="url(#b3)"/><path d="M44 28L87 35V39L46 31.5Z" fill="#d3d9e4" filter="url(#b1)" opacity=".8"/><ellipse cx="30" cy="50" rx="22" ry="5" fill="#d5dbe6" filter="url(#b1)" opacity=".8"/><g filter="url(#b2)"><path d="M14.4 6.8L20.8 10.2L17.6 18L14 15Z" fill="#dcd8d4"/><path d="M33.6 4.6L37.2 12.8L30.2 11Z" fill="#e2dedb"/><ellipse cx="26.6" cy="16.6" rx="12" ry="9.2" fill="#d9d9d5"/><path d="M17.5 23Q26 30 38.5 25.5L45.5 37L45 44Q38 47 34 45L31 50Q22 53 17 46Q14.5 36 17.5 23Z" fill="#c0bfbb"/><path d="M20.5 26.6Q28.5 31 37.5 26.8L38.6 30.2Q28 35 20 30.6Z" fill="#8c8c88"/><path d="M19 33Q24 32 27 36L34.4 51.6Q29 56 22.6 53Q20 45 17.6 41Z" fill="#d6d5d1"/><path d="M40 37.6Q45 37.6 47 41L49 48Q43 51.2 37.6 48.4Q38 42 40 37.6Z" fill="#d3d2ce"/><path d="M32.6 40.4L38 41L37.6 46.6L34.4 46.4Z" fill="#4d4b46"/><ellipse cx="28.4" cy="51.6" rx="6.2" ry="2.9" fill="#dddcd8"/><ellipse cx="43.2" cy="46.8" rx="5.8" ry="2.8" fill="#dcdbd7"/><ellipse cx="40.9" cy="15.3" rx="1.4" ry="2.7" fill="#4c4c4c"/></g><g filter="url(#b3)"><ellipse cx="24.2" cy="14.8" rx="1.5" ry="1.1" fill="#4a535e"/><ellipse cx="32" cy="14" rx="1.5" ry="1.1" fill="#4a535e"/><ellipse cx="29.6" cy="16.9" rx="1" ry=".8" fill="#b86f76"/><ellipse cx="29.7" cy="20.3" rx="1.9" ry="1.3" fill="#c56f7b"/><path d="M16.2 9.6L18.6 11.4L17 15.6Z" fill="#d8bfb8"/><path d="M33.6 6.6L35.6 11.4L32.4 10.6Z" fill="#dcc4bd"/><path d="M25 52.6l1 1.2M27.6 53.2l.8 1.2M30.2 53l.8 1M40.4 47.8l.8 1.2M43 48.2l.8 1.2M45.6 47.6l.8 1" stroke="#6e6a66" stroke-width=".8"/></g></g></svg>
<div style="left:862.80px;top:416.00px;font-size:12px;line-height:12px;color:#1c1c1c;letter-spacing:-1.127px;white-space:pre;word-spacing:1.2px;">HOME TYLES</div>
<div style="left:862.80px;top:433.00px;font-size:12px;line-height:12px;color:#1c1c1c;letter-spacing:-0.285px;white-space:pre;word-spacing:1.2px;">3611 14th Ave</div>
<div style="left:862.80px;top:449.00px;font-size:12px;line-height:12px;color:#1c1c1c;letter-spacing:-0.333px;white-space:pre;word-spacing:1.2px;">Brooklyn NY 11218</div>
<div style="left:1052.30px;top:416.00px;font-size:12px;line-height:12px;color:#333;letter-spacing:-1.604px;white-space:pre;font-weight:700;">P:</div>
<div style="left:1064.30px;top:416.00px;font-size:12px;line-height:12px;color:#1c1c1c;letter-spacing:-0.123px;white-space:pre;">718-215-5966</div>
<div style="left:1052.30px;top:434.00px;font-size:12px;line-height:12px;color:#333;letter-spacing:-1.804px;white-space:pre;font-weight:700;">E:</div>
<div style="left:1064.30px;top:434.00px;font-size:12px;line-height:12px;color:#1c1c1c;letter-spacing:-0.008px;white-space:pre;">office@hometyles.com</div>
<div style="left:1052.30px;top:452.00px;font-size:12px;line-height:12px;color:#333;letter-spacing:-1.33px;white-space:pre;font-weight:700;">F:</div>
<div style="left:1065.00px;top:452.00px;font-size:12px;line-height:12px;color:#1c1c1c;letter-spacing:-0.266px;white-space:pre;">+536345776</div>
<div style="left:507px;top:481px;width:736px;height:1px;background:#c8c8c8;"></div>
<div style="left:506.60px;top:555.00px;font-size:20px;line-height:20px;color:#000;letter-spacing:0.058px;white-space:pre;font-weight:700;">Item Receipt</div>
<div style="left:887px;top:513px;width:355px;height:72px;background:#fff;border:1px solid #c6c6c6;"></div>
<div style="left:888px;top:514px;width:353px;height:29px;background:#f5f5f5;"></div>
<div style="left:895.20px;top:523.00px;font-size:12.5px;line-height:12.5px;color:#000;letter-spacing:-0.421px;white-space:pre;font-weight:700;">Vendor</div>
<div style="left:895.20px;top:552.00px;font-size:12px;line-height:12px;color:#111;letter-spacing:-0.003px;white-space:pre;">Blue street 202, Ukraine</div>
<div style="left:507px;top:608px;width:735px;height:65px;background:#fff;border:1px solid #c6c6c6;"></div>
<div style="left:508px;top:609px;width:733px;height:30px;background:#f5f5f5;"></div>
<div style="left:653px;top:609px;width:1px;height:63px;background:#c6c6c6;"></div>
<div style="left:849px;top:609px;width:1px;height:63px;background:#c6c6c6;"></div>
<div style="left:988px;top:609px;width:1px;height:63px;background:#c6c6c6;"></div>
<div style="left:516.00px;top:618.00px;font-size:12.3px;line-height:12.3px;color:#000;letter-spacing:-0.605px;white-space:pre;font-weight:700;">Date</div>
<div style="left:662.60px;top:618.00px;font-size:12.3px;line-height:12.3px;color:#000;letter-spacing:-0.218px;white-space:pre;font-weight:700;">Reference #</div>
<div style="left:857.30px;top:618.00px;font-size:12.3px;line-height:12.3px;color:#000;letter-spacing:-0.314px;white-space:pre;font-weight:700;">Terms</div>
<div style="left:996.50px;top:618.00px;font-size:12.3px;line-height:12.3px;color:#000;letter-spacing:-0.436px;white-space:pre;font-weight:700;">Requested by</div>
<div style="left:516.60px;top:648.00px;font-size:12px;line-height:12px;color:#1c1c1c;letter-spacing:0.046px;white-space:pre;">12/21/2020</div>
<div style="left:507px;top:708px;width:735px;height:34px;background:#00508b;"></div>
<div style="left:540px;top:708px;width:1px;height:34px;background:#f2f6fa;"></div>
<div style="left:654px;top:708px;width:1px;height:34px;background:#f2f6fa;"></div>
<div style="left:908px;top:708px;width:1px;height:34px;background:#f2f6fa;"></div>
<div style="left:968px;top:708px;width:1px;height:34px;background:#f2f6fa;"></div>
<div style="left:1062px;top:708px;width:1px;height:34px;background:#f2f6fa;"></div>
<div style="left:1151px;top:708px;width:1px;height:34px;background:#f2f6fa;"></div>
<div style="left:507px;top:742px;width:735px;height:105px;background:#fff;border:1px solid #c6c6c6;border-top:none;"></div>
<div style="left:507px;top:793px;width:735px;height:1px;background:#c6c6c6;"></div>
<div style="left:540px;top:742px;width:1px;height:104px;background:#c6c6c6;"></div>
<div style="left:654px;top:742px;width:1px;height:104px;background:#c6c6c6;"></div>
<div style="left:908px;top:742px;width:1px;height:104px;background:#c6c6c6;"></div>
<div style="left:968px;top:742px;width:1px;height:104px;background:#c6c6c6;"></div>
<div style="left:1062px;top:742px;width:1px;height:104px;background:#c6c6c6;"></div>
<div style="left:1151px;top:742px;width:1px;height:104px;background:#c6c6c6;"></div>
<div style="left:520.30px;top:720.00px;font-size:11px;line-height:11px;color:#fff;letter-spacing:0px;white-space:pre;font-weight:700;">#</div>
<div style="left:548.60px;top:720.00px;font-size:12.5px;line-height:12.5px;color:#fff;letter-spacing:0.204px;white-space:pre;font-weight:700;">Item</div>
<div style="left:662.70px;top:720.00px;font-size:12.5px;line-height:12.5px;color:#fff;letter-spacing:-0.493px;white-space:pre;font-weight:700;">Description</div>
<div style="left:927.75px;top:720.00px;font-size:12.5px;line-height:12.5px;color:#fff;letter-spacing:-0.293px;white-space:pre;font-weight:700;">Qty</div>
<div style="left:976.30px;top:720.00px;font-size:12.5px;line-height:12.5px;color:#fff;letter-spacing:-0.368px;white-space:pre;font-weight:700;">Qty Per Carton</div>
<div style="left:1074.35px;top:720.00px;font-size:12.5px;line-height:12.5px;color:#fff;letter-spacing:-0.461px;white-space:pre;font-weight:700;"># of Cartons</div>
<div style="left:1171.90px;top:711.00px;font-size:12.5px;line-height:12.5px;color:#fff;letter-spacing:-0.505px;white-space:pre;font-weight:700;">Damaged</div>
<div style="left:1187.80px;top:727.00px;font-size:12.5px;line-height:12.5px;color:#fff;letter-spacing:-0.543px;white-space:pre;font-weight:700;">Qty</div>
<div style="left:520.30px;top:762.00px;font-size:12px;line-height:12px;color:#1c1c1c;letter-spacing:0px;white-space:pre;">1</div>
<div style="left:548.00px;top:754.00px;font-size:12px;line-height:12px;color:#1c1c1c;letter-spacing:-0.314px;white-space:pre;">Item 1</div>
<div style="left:549.00px;top:770.00px;font-size:12px;line-height:12px;color:#1c1c1c;letter-spacing:-0.475px;white-space:pre;">PO-0013153</div>
<div style="left:662.70px;top:754.00px;font-size:12px;line-height:12px;color:#1c1c1c;letter-spacing:-0.075px;white-space:pre;">Description for the Item 1</div>
<div style="left:952.50px;top:754.00px;font-size:12px;line-height:12px;color:#1c1c1c;letter-spacing:0px;white-space:pre;">4</div>
<div style="left:1046.30px;top:754.00px;font-size:12px;line-height:12px;color:#1c1c1c;letter-spacing:0px;white-space:pre;">3</div>
<div style="left:1121.90px;top:754.00px;font-size:12px;line-height:12px;color:#1c1c1c;letter-spacing:-0.827px;white-space:pre;">1.33</div>
<div style="left:520.30px;top:815.00px;font-size:12px;line-height:12px;color:#1c1c1c;letter-spacing:0px;white-space:pre;">2</div>
<div style="left:548.00px;top:806.00px;font-size:12px;line-height:12px;color:#1c1c1c;letter-spacing:-0.314px;white-space:pre;">Item 1</div>
<div style="left:549.00px;top:822.00px;font-size:12px;line-height:12px;color:#1c1c1c;letter-spacing:-0.475px;white-space:pre;">PO-0013169</div>
<div style="left:662.70px;top:807.00px;font-size:12px;line-height:12px;color:#1c1c1c;letter-spacing:-0.075px;white-space:pre;">Description for the Item 1</div>
<div style="left:952.50px;top:807.00px;font-size:12px;line-height:12px;color:#1c1c1c;letter-spacing:0px;white-space:pre;">3</div>
<div style="left:1046.30px;top:807.00px;font-size:12px;line-height:12px;color:#1c1c1c;letter-spacing:0px;white-space:pre;">3</div>
<div style="left:1136.10px;top:807.00px;font-size:12px;line-height:12px;color:#1c1c1c;letter-spacing:0px;white-space:pre;">1</div>
<div style="left:1090.80px;top:888.00px;font-size:12px;line-height:12px;color:#222;letter-spacing:-0.055px;white-space:pre;font-weight:700;">Total:</div>
<div style="left:1233.00px;top:888.00px;font-size:12px;line-height:12px;color:#222;letter-spacing:0px;white-space:pre;font-weight:700;">7</div>
<div style="left:507.20px;top:932.00px;font-size:12px;line-height:12px;color:#333;letter-spacing:-0.322px;white-space:pre;font-weight:700;">Terms and Conditions</div>
<svg style="left:534px;top:689px" width="108" height="170" viewBox="0 0 108 170"><rect x="1.15" y="1.85" width="105.7" height="166.5" rx="2" fill="none" stroke="#fa0606" stroke-width="2.3"/></svg>
</body></html>
